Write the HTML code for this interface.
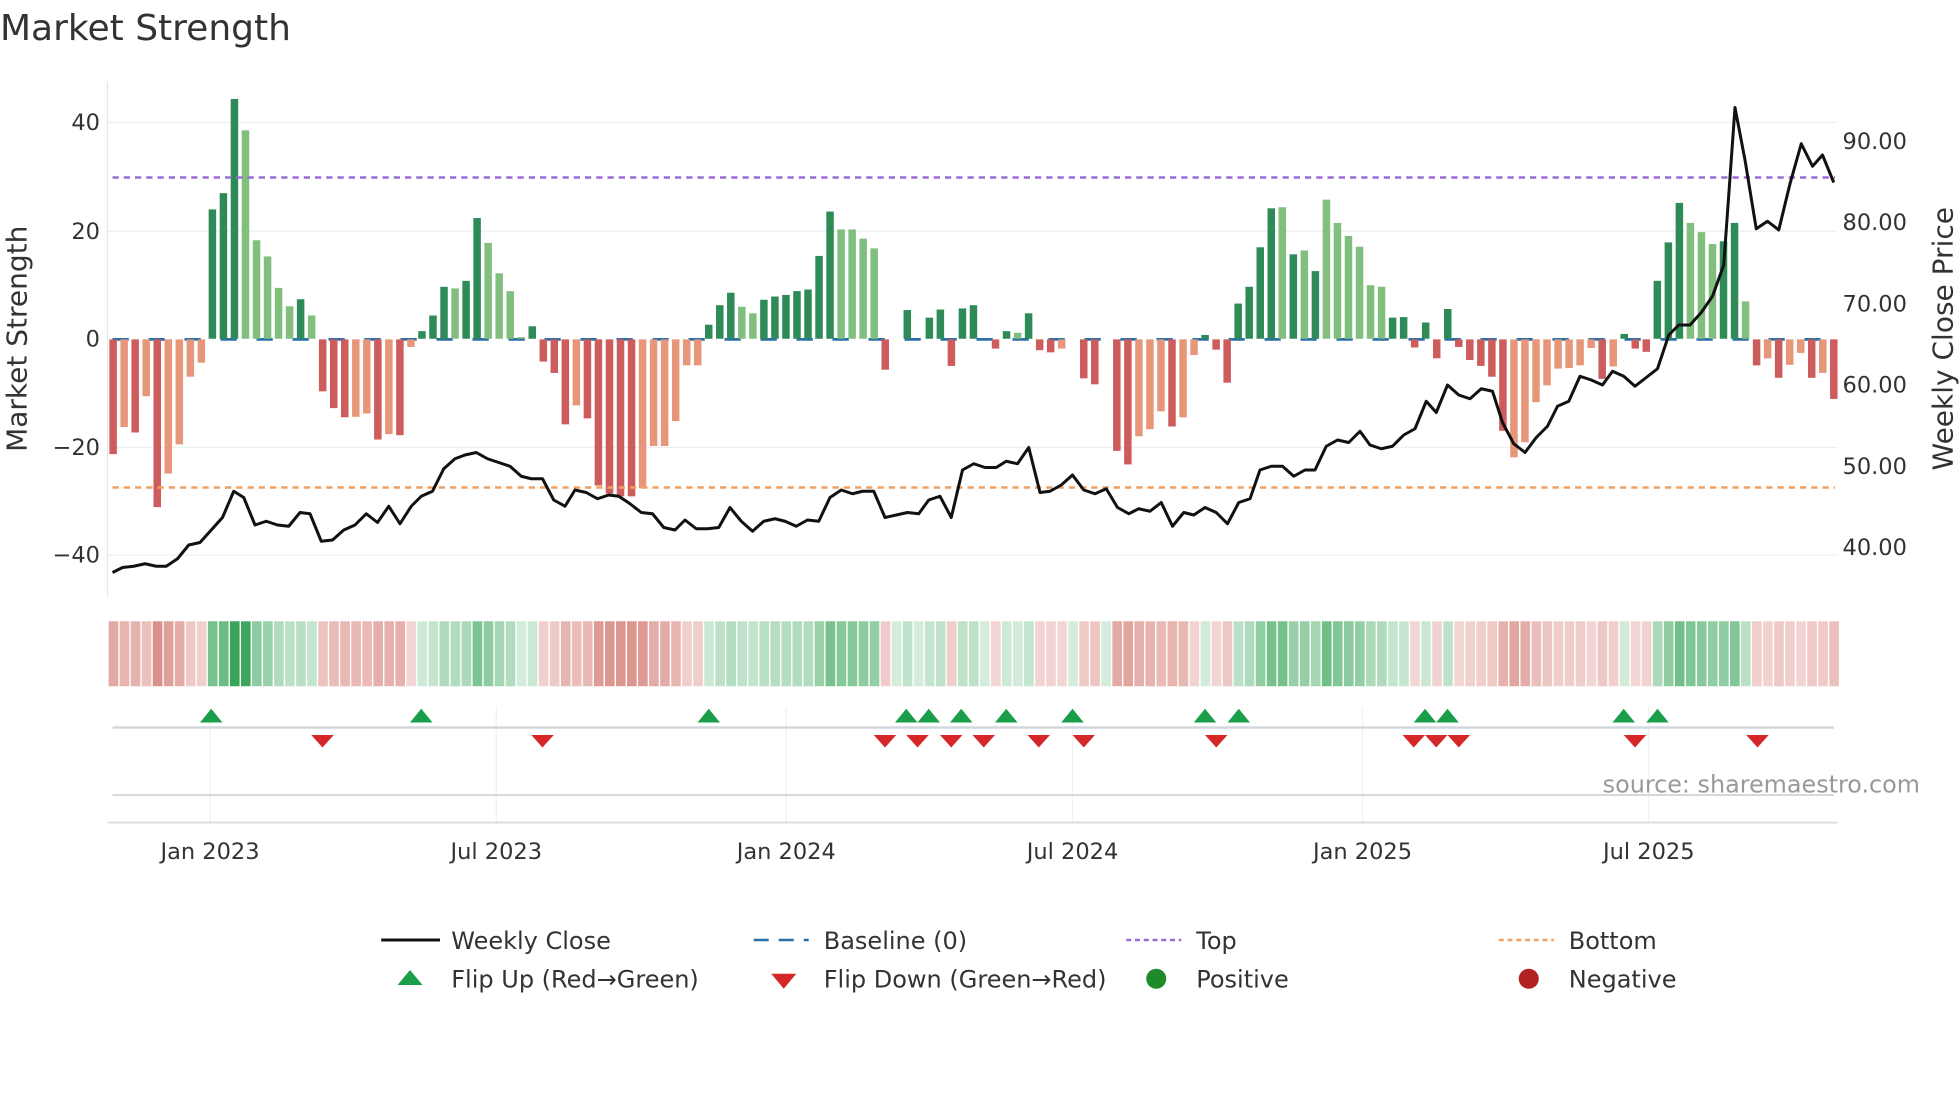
<!DOCTYPE html>
<html><head><meta charset="utf-8"><style>
html,body{margin:0;padding:0;background:#fff;}
svg{display:block;font-family:"DejaVu Sans","Liberation Sans",sans-serif;}
</style></head><body>
<svg id="s" width="1960" height="1102" viewBox="0 0 1568 881.6" xmlns="http://www.w3.org/2000/svg">
<rect width="1568" height="882" fill="#fff"/>
<text x="0" y="32" font-size="28.8" fill="#333">Market Strength</text>
<g stroke="#eceff2" stroke-width="1">
<line x1="86" x2="1470" y1="98" y2="98"/><line x1="86" x2="1470" y1="185" y2="185"/>
<line x1="86" x2="1470" y1="358" y2="358"/><line x1="86" x2="1470" y1="444" y2="444"/>
</g>
<line x1="86" x2="86" y1="65" y2="478" stroke="#e3e6ea"/>
<g font-size="18" fill="#333" text-anchor="end">
<text x="80" y="104">40</text><text x="80" y="191">20</text><text x="80" y="277">0</text>
<text x="80" y="364">−20</text><text x="80" y="450">−40</text>
</g>
<g font-size="18" fill="#333">
<text x="1474" y="119">90.00</text><text x="1474" y="184">80.00</text><text x="1474" y="249">70.00</text>
<text x="1474" y="314">60.00</text><text x="1474" y="379">50.00</text><text x="1474" y="444">40.00</text>
</g>
<text transform="translate(21,271) rotate(-90)" font-size="22.4" fill="#333" text-anchor="middle">Market Strength</text>
<text transform="translate(1562,271) rotate(-90)" font-size="22.4" fill="#333" text-anchor="middle">Weekly Close Price</text>
<line x1="90" x2="1466" y1="271.5" y2="271.5" stroke="#2a6fa8" stroke-width="2.2" stroke-dasharray="13 15.8"/>
<g id="bars"></g>
<line x1="90" x2="1468" y1="142" y2="142" stroke="#9a6bd6" stroke-width="2" stroke-dasharray="5 4"/>
<line x1="90" x2="1468" y1="390" y2="390" stroke="#f0a060" stroke-width="2" stroke-dasharray="5 4"/>
<polyline id="price" fill="none" stroke="#111" stroke-width="2.4" stroke-linejoin="round"/>
<g id="strip"></g>
<g stroke="#eef0f2" stroke-width="1">
<line x1="168" x2="168" y1="566" y2="658"/><line x1="397" x2="397" y1="566" y2="658"/>
<line x1="629" x2="629" y1="566" y2="658"/><line x1="858" x2="858" y1="566" y2="658"/>
<line x1="1090" x2="1090" y1="566" y2="658"/><line x1="1319" x2="1319" y1="566" y2="658"/>
</g>
<line x1="90" x2="1467" y1="582" y2="582" stroke="#d3d7dd" stroke-width="2"/>
<line x1="90" x2="1467" y1="636" y2="636" stroke="#d3d7dd" stroke-width="1.5"/>
<line x1="86" x2="1470" y1="658" y2="658" stroke="#d8dbe0" stroke-width="1.5"/>
<g id="mk"></g>
<text x="1536" y="634" font-size="19.1" fill="#999" text-anchor="end">source: sharemaestro.com</text>
<g font-size="18" fill="#333" text-anchor="middle">
<text x="168" y="687">Jan 2023</text><text x="397" y="687">Jul 2023</text><text x="629" y="687">Jan 2024</text>
<text x="858" y="687">Jul 2024</text><text x="1090" y="687">Jan 2025</text><text x="1319" y="687">Jul 2025</text>
</g>
<g font-size="19.2" fill="#333">
<line x1="305" x2="352" y1="752" y2="752" stroke="#111" stroke-width="2.4"/>
<text x="361" y="759">Weekly Close</text>
<line x1="603" x2="647" y1="752" y2="752" stroke="#2a6fa8" stroke-width="2" stroke-dasharray="12 8"/>
<text x="659" y="759">Baseline (0)</text>
<line x1="901" x2="945" y1="752" y2="752" stroke="#9a6bd6" stroke-width="2" stroke-dasharray="4 3"/>
<text x="957" y="759">Top</text>
<line x1="1199" x2="1243" y1="752" y2="752" stroke="#f0a060" stroke-width="2" stroke-dasharray="4 3"/>
<text x="1255" y="759">Bottom</text>
<polygon points="318,788 328,776 338,788" fill="#1a9e4a"/>
<text x="361" y="790">Flip Up (Red→Green)</text>
<polygon points="617,779 637,779 627,791" fill="#d62728"/>
<text x="659" y="790">Flip Down (Green→Red)</text>
<circle cx="925" cy="783" r="8" fill="#1f8a2a"/>
<text x="957" y="790">Positive</text>
<circle cx="1223" cy="783" r="8" fill="#b22222"/>
<text x="1255" y="790">Negative</text>
</g>
</svg>
<script>
var V=[-21.2,-16.2,-17.2,-10.5,-31,-24.8,-19.4,-6.9,-4.3,23.9,26.9,44.3,38.5,18.2,15.2,9.4,6,7.3,4.3,-9.6,-12.7,-14.4,-14.3,-13.7,-18.5,-17.5,-17.7,-1.4,1.4,4.3,9.6,9.3,10.7,22.3,17.7,12.1,8.8,0.3,2.3,-4.1,-6.2,-15.7,-12.2,-14.6,-27,-28.5,-29,-29,-27.5,-19.7,-19.7,-15.1,-4.8,-4.8,2.6,6.2,8.5,5.9,4.7,7.2,7.8,8.1,8.8,9.1,15.3,23.5,20.2,20.2,18.5,16.7,-5.6,0,5.3,0,3.9,5.4,-4.9,5.6,6.2,0,-1.7,1.4,1.1,4.7,-2,-2.4,-1.7,0,-7.2,-8.3,0,-20.6,-23.1,-17.9,-16.6,-13.3,-16.1,-14.4,-2.9,0.7,-1.9,-8,6.5,9.6,16.9,24.1,24.3,15.6,16.3,12.5,25.7,21.4,19,17,9.9,9.6,3.9,4,-1.5,3,-3.5,5.5,-1.4,-3.8,-4.9,-6.9,-16.9,-21.8,-19,-11.6,-8.5,-5.4,-5.3,-4.8,-1.6,-7.3,-5,0.9,-1.7,-2.3,10.7,17.8,25.1,21.4,19.7,17.5,18,21.4,6.9,-4.8,-3.5,-7.1,-4.7,-2.5,-7.1,-6.2,-11];
var L="DLDLDLLLLDDDLLLLLDLDDDLLDLDLDDDLDDLLLLDDDDLDDDDDLLLLLLDDDLLDDDDDDDLLLLD-D-DDDDD-DDLDDDL-DD-DDLLLDLLDDDDDDDLDLDLLLLLLDDDDDDDDDDDLLLLLLLLDLDDDDDDLLLDDLDLDLLDLD";
var ns="http://www.w3.org/2000/svg";
function el(t,a,p){var e=document.createElementNS(ns,t);for(var k in a)e.setAttribute(k,a[k]);document.getElementById(p).appendChild(e);return e;}
for(var i=0;i<V.length;i++){
 var x=87.5+8.824*i,v=V[i],h=Math.abs(v)*4.33,lt=L[i]==='L';
 if(v!==0){
  var c=v>0?(lt?'#80bf7d':'#2e8b57'):(lt?'#e8967a':'#cd5c5c');
  el('rect',{x:x,y:v>0?271-h:271.5,width:6,height:h,fill:c},'bars');
 }
 var a=Math.min(1,Math.abs(v)/40);
 var col=v>=0?'rgba(45,160,80,'+(0.2+0.75*a)+')':'rgba(200,85,75,'+(0.22+0.55*a)+')';
 el('rect',{x:x-0.6,y:497,width:7.7,height:52,fill:col},'strip');
}
var P=[[90,458],[98,454],[107,453],[116,451],[125,453],[133,453],[142,447],[151,436],[160,434],[169,424],[178,414],[187,393],[195,398],[204,420],[213,417],[222,420],[231,421],[240,410],[248,411],[257,433],[266,432],[275,424],[284,420],[293,411],[302,418],[311,405],[320,419],[329,405],[337,397],[346,393],[355,375],[364,367],[372,364],[381,362],[390,367],[399,370],[408,373],[417,381],[425,383],[434,383],[443,400],[452,405],[460,392],[469,394],[478,399],[487,396],[495,397],[504,403],[513,410],[522,411],[531,422],[540,424],[548,416],[557,423],[566,423],[575,422],[584,406],[593,417],[602,425],[611,417],[620,415],[628,417],[637,421],[646,416],[655,417],[664,398],[673,392],[682,395],[690,393],[699,393],[708,414],[717,412],[726,410],[735,411],[743,400],[752,397],[761,414],[770,376],[779,371],[788,374],[797,374],[805,369],[814,371],[823,358],[832,394],[840,393],[849,388],[858,380],[867,392],[876,395],[885,391],[894,406],[903,411],[911,407],[920,409],[929,402],[938,421],[947,410],[955,412],[964,406],[973,410],[982,419],[991,402],[1000,399],[1008,376],[1017,373],[1026,373],[1035,381],[1044,376],[1052,376],[1061,357],[1070,352],[1079,354],[1088,345],[1096,356],[1105,359],[1114,357],[1123,348],[1132,343],[1141,321],[1149,330],[1158,308],[1167,316],[1176,319],[1185,311],[1194,313],[1202,338],[1211,355],[1220,362],[1229,350],[1238,341],[1246,325],[1255,321],[1264,301],[1273,304],[1282,308],[1290,297],[1299,301],[1308,309],[1317,302],[1326,295],[1335,268],[1343,260],[1352,260],[1361,250],[1370,237],[1379,212],[1388,86],[1396,128],[1405,183],[1414,177],[1423,184],[1432,147],[1441,115],[1450,133],[1458,124],[1467,146]];
document.getElementById('price').setAttribute('points',P.map(function(p){return p.join(',')}).join(' '));
[169,337,567,725,743,769,805,858,964,991,1140,1158,1299,1326].forEach(function(x){el('polygon',{points:(x-9)+',578 '+x+',567 '+(x+9)+',578',fill:'#1a9e4a'},'mk');});
[258,434,708,734,761,787,831,867,973,1131,1149,1167,1308,1406].forEach(function(x){el('polygon',{points:(x-9)+',588 '+(x+9)+',588 '+x+',598',fill:'#d62728'},'mk');});
</script>
</body></html>
